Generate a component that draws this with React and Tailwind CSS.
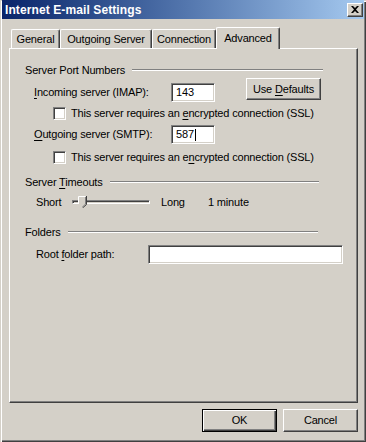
import React from 'react';

const raised =
  'border border-t-white border-l-white border-r-[#404040] border-b-[#404040] shadow-[inset_-1px_-1px_0_#808080]';
const sunken =
  'border border-t-[#808080] border-l-[#808080] border-r-white border-b-white shadow-[inset_1px_1px_0_#404040,inset_-1px_-1px_0_#d4d0c8]';

const U = ({ children }) => <span className="underline underline-offset-[2px]">{children}</span>;

const GroupHeader = ({ children, width }) => (
  <div className="flex items-center h-[14px]" style={{ width }}>
    <span className="whitespace-nowrap">{children}</span>
    <div className="flex-1 ml-[7px] h-[2px] border-t border-t-[#808080] border-b border-b-white" />
  </div>
);

const Checkbox = ({ children }) => (
  <div className="flex items-center h-[13px] pl-[28px]">
    <div className={`w-[13px] h-[13px] bg-white ${sunken}`} />
    <span className="ml-[5px] whitespace-nowrap">{children}</span>
  </div>
);

const Tab = ({ label, width, selected }) => (
  <div
    className={`flex items-center justify-center bg-[#d4d0c8] rounded-t-[2px] border-t border-l border-r border-t-white border-l-white border-r-[#404040] shadow-[inset_-1px_0_0_#808080] ${
      selected ? 'h-[22px] relative z-10 -mb-px pb-[1px]' : 'h-[19px] pt-[1px]'
    }`}
    style={{ width }}
  >
    {label}
  </div>
);

const Button = ({ children, isDefault }) => (
  <div
    className={`w-[75px] h-[23px] flex items-center justify-center ${
      isDefault
        ? 'border border-black shadow-[inset_1px_1px_0_#fff,inset_-1px_-1px_0_#404040,inset_-2px_-2px_0_#808080]'
        : raised
    }`}
  >
    {children}
  </div>
);

export default function App() {
  return (
    <div className="w-[366px] h-[442px] bg-[#d4d0c8] px-[2px] flex flex-col text-[11px] leading-none text-black font-['Liberation_Sans',Arial,sans-serif] shadow-[inset_1px_1px_0_#d4d0c8,inset_2px_2px_0_#fff,inset_-1px_-1px_0_#404040,inset_-2px_-2px_0_#808080]">
      <div className="h-[19px] flex items-center justify-between bg-gradient-to-r from-[#0a246a] to-[#a6caf0] pl-[3px] pr-[1px]">
        <span className="text-white font-bold text-[12px] tracking-[0.1px]">Internet E-mail Settings</span>
        <div className={`w-[16px] h-[14px] bg-[#d4d0c8] flex items-center justify-center ${raised}`}>
          <svg width="8" height="7" viewBox="0 0 8 7">
            <path d="M0 0h2l2 2 2-2h2L5 3.5 8 7H6L4 5 2 7H0l3-3.5z" fill="#000" />
          </svg>
        </div>
      </div>

      <div className="pl-[7px] mt-[8px] tracking-[-0.17px]">
        <div className="flex items-end h-[21px] pl-[2px]">
          <Tab label="General" width={49} />
          <Tab label="Outgoing Server" width={92} />
          <Tab label="Connection" width={64} />
          <Tab label="Advanced" width={64} selected />
        </div>

        <div className="w-[349px] h-[355px] border border-t-white border-l-white border-r-[#404040] border-b-[#404040] shadow-[inset_-1px_-1px_0_#808080] pl-[15px] flex flex-col">
          <div className="mt-[14px]">
            <GroupHeader width={298}>Server Port Numbers</GroupHeader>
          </div>

          <div className="mt-[1px] h-[24px] flex items-start">
            <div className="w-[146px] pl-[9px] h-[19px] mt-[5px] flex items-center whitespace-nowrap">
              <U>I</U>ncoming server (IMAP):
            </div>
            <div className={`w-[44px] h-[19px] mt-[5px] bg-white flex items-center pl-[4px] ${sunken}`}>143</div>
            <div className={`ml-[31px] w-[75px] h-[22px] flex items-center justify-center ${raised}`}>
              Use&nbsp;<U>D</U>efaults
            </div>
          </div>

          <div className="mt-[5px]">
            <Checkbox>
              This server requires an <U>e</U>ncrypted connection (SSL)
            </Checkbox>
          </div>

          <div className="mt-[5px] h-[19px] flex items-center">
            <div className="w-[146px] pl-[9px] whitespace-nowrap">
              <U>O</U>utgoing server (SMTP):
            </div>
            <div className={`w-[44px] h-[19px] bg-white flex items-center pl-[4px] ${sunken}`}>
              587<span className="inline-block w-px h-[12px] bg-black ml-[1px]" />
            </div>
          </div>

          <div className="mt-[7px]">
            <Checkbox>
              This server requires an e<U>n</U>crypted connection (SSL)
            </Checkbox>
          </div>

          <div className="mt-[11px]">
            <GroupHeader width={294}>
              Server <U>T</U>imeouts
            </GroupHeader>
          </div>

          <div className="mt-[4px] h-[18px] flex items-center">
            <div className="w-[47px] pl-[11px]">Short</div>
            <div className="relative w-[78px] h-[18px] flex items-center">
              <div className="w-full h-[4px] border border-t-[#808080] border-l-[#808080] border-r-white border-b-white shadow-[inset_1px_1px_0_#404040]" />
              <svg className="absolute left-[6px] top-[3px]" width="9" height="12" viewBox="0 0 9 12">
                <path d="M0.5 0.5h7.5v7.5l-3.5 3.5-4-4z" fill="#d4d0c8" />
                <path d="M0.5 8V0.5h7" stroke="#fff" fill="none" />
                <path d="M8.5 0v8.5l-4 3.5" stroke="#404040" fill="none" />
                <path d="M7.5 1v7l-3 3" stroke="#808080" fill="none" />
              </svg>
            </div>
            <div className="ml-[11px] w-[47px]">Long</div>
            <div>1 minute</div>
          </div>

          <div className="mt-[14px]">
            <GroupHeader width={293}>Folders</GroupHeader>
          </div>

          <div className="mt-[6px] h-[19px] flex items-center">
            <div className="w-[123px] pl-[11px] whitespace-nowrap">
              Root <U>f</U>older path:
            </div>
            <div className={`w-[195px] h-[19px] bg-white ${sunken}`} />
          </div>
        </div>

        <div className="w-[349px] mt-[6px] flex justify-end gap-[6px]">
          <Button isDefault>OK</Button>
          <Button>Cancel</Button>
        </div>
      </div>
    </div>
  );
}
